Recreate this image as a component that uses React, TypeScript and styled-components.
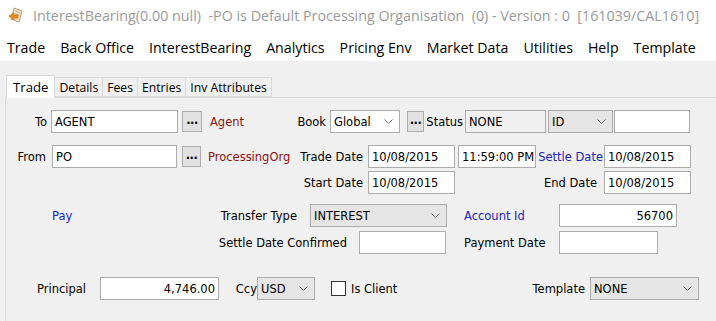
import React from "react";
import styled, { createGlobalStyle } from "styled-components";

const GlobalStyle = createGlobalStyle`
  body {
    margin: 0;
    background: #f0f0f0;
    font-family: "DejaVu Sans", Tahoma, sans-serif;
  }
`;

const Window = styled.div`
  width: 716px;
  height: 321px;
  overflow: hidden;
  background: #f0f0f0;
`;

const TitleBar = styled.div`
  height: 30px;
  background: #ffffff;
  display: flex;
  align-items: center;
  padding-left: 8px;
  gap: 9px;
  font-family: "Open Sans", "Noto Sans", sans-serif;
  font-size: 14.3px;
  color: #9a9a9a;
  white-space: pre;
`;

const MenuBar = styled.div`
  height: 31px;
  box-sizing: border-box;
  padding: 4px 0 0 7px;
  background: #ffffff;
  display: flex;
  align-items: center;
  gap: 15px;
  font-family: "Open Sans", "Noto Sans", sans-serif;
  font-size: 14.2px;
  color: #000000;
`;

const MenuItem = styled.span`
  white-space: nowrap;
`;

const Body = styled.div`
  padding-top: 13px;
`;

const TabStrip = styled.div`
  display: flex;
  align-items: flex-end;
  height: 23px;
  padding-left: 6px;
  font-family: "Open Sans", "Noto Sans", sans-serif;
`;

const Tab = styled.div<{ $active?: boolean }>`
  height: ${(p) => (p.$active ? 23 : 20)}px;
  box-sizing: border-box;
  display: flex;
  align-items: center;
  justify-content: center;
  padding: 0 ${(p) => (p.$active ? 6 : 4)}px;
  font-size: ${(p) => (p.$active ? 13.2 : 12.2)}px;
  background: ${(p) => (p.$active ? "#ffffff" : "#f0f0f0")};
  border: 1px solid #d9d9d9;
  border-bottom: ${(p) => (p.$active ? "none" : "1px solid #d9d9d9")};
  margin-left: ${(p) => (p.$active ? 0 : -1)}px;
  margin-bottom: ${(p) => (p.$active ? -1 : 0)}px;
  position: relative;
  z-index: ${(p) => (p.$active ? 1 : 0)};
`;

const Panel = styled.div`
  margin-left: 5px;
  border-top: 1px solid #d9d9d9;
  border-left: 1px solid #d9d9d9;
  height: 230px;
  padding-top: 12px;
  box-sizing: border-box;
  font-size: 11.5px;
`;

const Row = styled.div<{ $mt?: number }>`
  display: flex;
  align-items: center;
  height: 23px;
  margin-top: ${(p) => p.$mt ?? 0}px;
`;

const Label = styled.span<{ $w: number; $ml?: number; $align?: string; $color?: string }>`
  width: ${(p) => p.$w}px;
  margin-left: ${(p) => p.$ml ?? 0}px;
  text-align: ${(p) => p.$align ?? "right"};
  color: ${(p) => p.$color ?? "#000000"};
  white-space: nowrap;
  flex-shrink: 0;
`;

const TextBox = styled.div<{ $w: number; $ml?: number; $right?: boolean; $grey?: boolean }>`
  width: ${(p) => p.$w}px;
  height: 23px;
  margin-left: ${(p) => p.$ml ?? 0}px;
  box-sizing: border-box;
  border: 1px solid #acacac;
  background: ${(p) => (p.$grey ? "#f0f0f0" : "#ffffff")};
  display: flex;
  align-items: center;
  justify-content: ${(p) => (p.$right ? "flex-end" : "flex-start")};
  padding: 0 3px;
  white-space: nowrap;
  overflow: hidden;
  flex-shrink: 0;
`;

const DotsButton = styled.div<{ $w: number; $ml?: number }>`
  width: ${(p) => p.$w}px;
  height: 21px;
  margin-left: ${(p) => p.$ml ?? 0}px;
  box-sizing: border-box;
  border: 1px solid #adadad;
  background: #e1e1e1;
  display: flex;
  align-items: center;
  justify-content: center;
  font-weight: bold;
  letter-spacing: -0.5px;
  padding-bottom: 3px;
  flex-shrink: 0;
`;

const Select = styled.div<{ $w: number; $ml?: number; $white?: boolean }>`
  width: ${(p) => p.$w}px;
  height: 23px;
  margin-left: ${(p) => p.$ml ?? 0}px;
  box-sizing: border-box;
  border: 1px solid #acacac;
  background: ${(p) => (p.$white ? "#ffffff" : "#e5e5e5")};
  display: flex;
  align-items: center;
  justify-content: space-between;
  padding: 0 6px 0 3px;
  flex-shrink: 0;
`;

const CheckBox = styled.div<{ $ml?: number }>`
  width: 15px;
  height: 15px;
  margin-left: ${(p) => p.$ml ?? 0}px;
  box-sizing: border-box;
  border: 1px solid #333333;
  background: #ffffff;
  flex-shrink: 0;
`;

const Chevron = () => (
  <svg width="9" height="5" viewBox="0 0 9 5">
    <path d="M0.5 0.5 L4.5 4.5 L8.5 0.5" fill="none" stroke="#6d6d6d" strokeWidth="1" />
  </svg>
);

const AppIcon = () => (
  <svg width="16" height="16" viewBox="0 0 16 16">
    <path d="M6 1 L14 4 L11 15 L3 12 Z" fill="#f3e2c4" stroke="#9b8a70" strokeWidth="0.8" />
    <path d="M7 4 L12 6 M6.3 6.5 L11.3 8.5 M5.6 9 L10.6 11" stroke="#b9a688" strokeWidth="0.8" />
    <path d="M1 9 L6 6 L6 8 L10 8 L10 11 L6 11 L6 13 Z" fill="#f08a1c" stroke="#c7650a" strokeWidth="0.6" />
  </svg>
);

const RED = "#8b1010";
const BLUE = "#2222bb";

const menu = ["Trade", "Back Office", "InterestBearing", "Analytics", "Pricing Env", "Market Data", "Utilities", "Help", "Template"];
const tabs = ["Trade", "Details", "Fees", "Entries", "Inv Attributes"];

const App: React.FC = () => {
  return (
    <Window>
      <GlobalStyle />
      <TitleBar>
        <AppIcon />
        <span>InterestBearing(0.00 null)  -PO is Default Processing Organisation  (0) - Version : 0  [161039/CAL1610]</span>
      </TitleBar>
      <MenuBar>
        {menu.map((m) => (
          <MenuItem key={m}>{m}</MenuItem>
        ))}
      </MenuBar>
      <Body>
        <TabStrip>
          {tabs.map((t, i) => (
            <Tab key={t} $active={i === 0}>
              {t}
            </Tab>
          ))}
        </TabStrip>
        <Panel>
          <Row>
            <Label $w={41}>To</Label>
            <TextBox $w={127} $ml={4}>AGENT</TextBox>
            <DotsButton $w={20} $ml={4}>...</DotsButton>
            <Label $w={80} $ml={8} $align="left" $color={RED}>Agent</Label>
            <Label $w={36}>Book</Label>
            <Select $w={70} $ml={4} $white>
              Global
              <Chevron />
            </Select>
            <DotsButton $w={17} $ml={7}>...</DotsButton>
            <Label $w={39}>Status</Label>
            <TextBox $w={81} $ml={2} $grey>NONE</TextBox>
            <Select $w={65} $ml={2}>
              ID
              <Chevron />
            </Select>
            <TextBox $w={76} $ml={1} />
          </Row>
          <Row $mt={12}>
            <Label $w={40}>From</Label>
            <TextBox $w={125} $ml={6}>PO</TextBox>
            <DotsButton $w={19} $ml={5}>...</DotsButton>
            <Label $w={80} $ml={7} $align="left" $color={RED}>ProcessingOrg</Label>
            <Label $w={75}>Trade Date</Label>
            <TextBox $w={87} $ml={5}>10/08/2015</TextBox>
            <TextBox $w={78} $ml={3}>11:59:00 PM</TextBox>
            <Label $w={67} $color={BLUE}>Settle Date</Label>
            <TextBox $w={87} $ml={1}>10/08/2015</TextBox>
          </Row>
          <Row $mt={3}>
            <Label $w={357}>Start Date</Label>
            <TextBox $w={87} $ml={5}>10/08/2015</TextBox>
            <Label $w={142}>End Date</Label>
            <TextBox $w={87} $ml={7}>10/08/2015</TextBox>
          </Row>
          <Row $mt={10}>
            <Label $w={30} $ml={46} $align="left" $color={BLUE}>Pay</Label>
            <Label $w={215}>Transfer Type</Label>
            <Select $w={137} $ml={13}>
              INTEREST
              <Chevron />
            </Select>
            <Label $w={95} $ml={17} $align="left" $color={BLUE}>Account Id</Label>
            <TextBox $w={118} $right>56700</TextBox>
          </Row>
          <Row $mt={4}>
            <Label $w={341}>Settle Date Confirmed</Label>
            <TextBox $w={87} $ml={12} />
            <Label $w={95} $ml={18} $align="left">Payment Date</Label>
            <TextBox $w={99} />
          </Row>
          <Row $mt={23}>
            <Label $w={80}>Principal</Label>
            <TextBox $w={119} $ml={14} $right>4,746.00</TextBox>
            <Label $w={38}>Ccy</Label>
            <Select $w={58}>
              USD
              <Chevron />
            </Select>
            <CheckBox $ml={16} />
            <Label $w={100} $ml={5} $align="left">Is Client</Label>
            <Label $w={134}>Template</Label>
            <Select $w={109} $ml={5}>
              NONE
              <Chevron />
            </Select>
          </Row>
        </Panel>
      </Body>
    </Window>
  );
};

export default App;
